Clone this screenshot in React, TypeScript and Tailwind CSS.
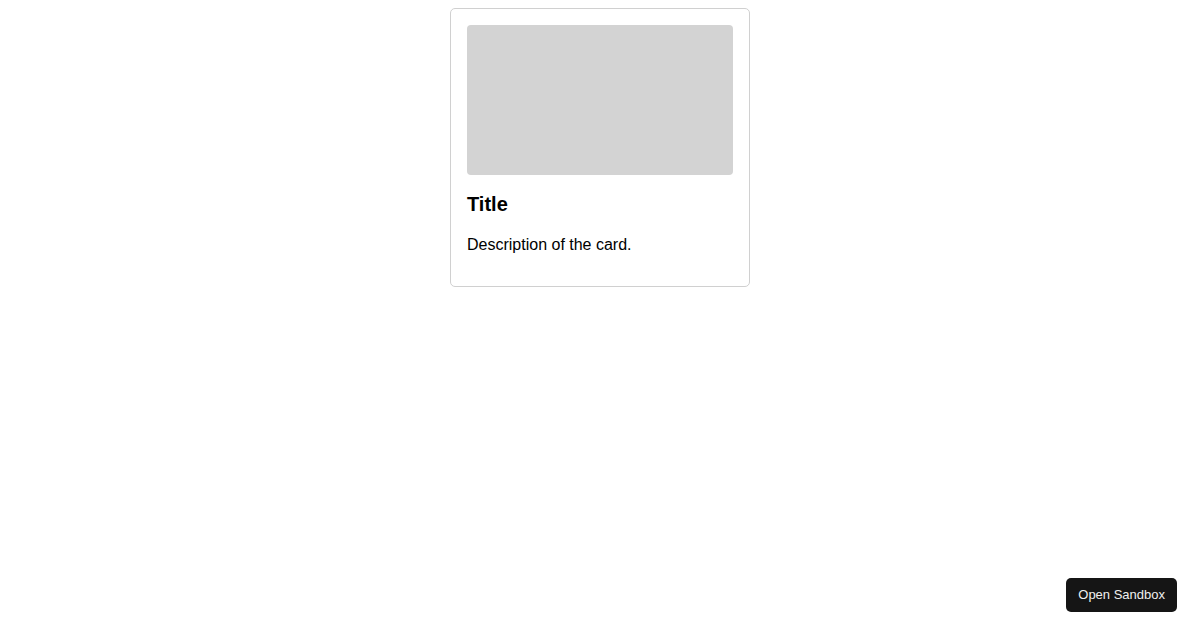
import React from 'react';

function Card({ title, description }: { title: string; description: string }) {
  return (
    <div className="w-[300px] rounded-[5px] border border-[#d0d0d0] bg-white p-4">
      <div className="h-[150px] w-full rounded-[4px] bg-[#d3d3d3]" />
      <h2 className="mt-[18px] mb-[20px] text-[20px] leading-[23px] font-bold text-black">{title}</h2>
      <p className="mb-[16px] text-[16px] leading-[18px] text-black">{description}</p>
    </div>
  );
}

export default function App() {
  return (
    <div className="h-[630px] w-full bg-white font-['Liberation_Sans',Arial,sans-serif]">
      <div className="flex justify-center pt-2">
        <Card title="Title" description="Description of the card." />
      </div>
      <button className="fixed right-[23px] bottom-[18px] h-[34px] rounded-[5px] bg-[#151515] px-[12px] text-[13px] text-[#f0f0f0]">
        Open Sandbox
      </button>
    </div>
  );
}
